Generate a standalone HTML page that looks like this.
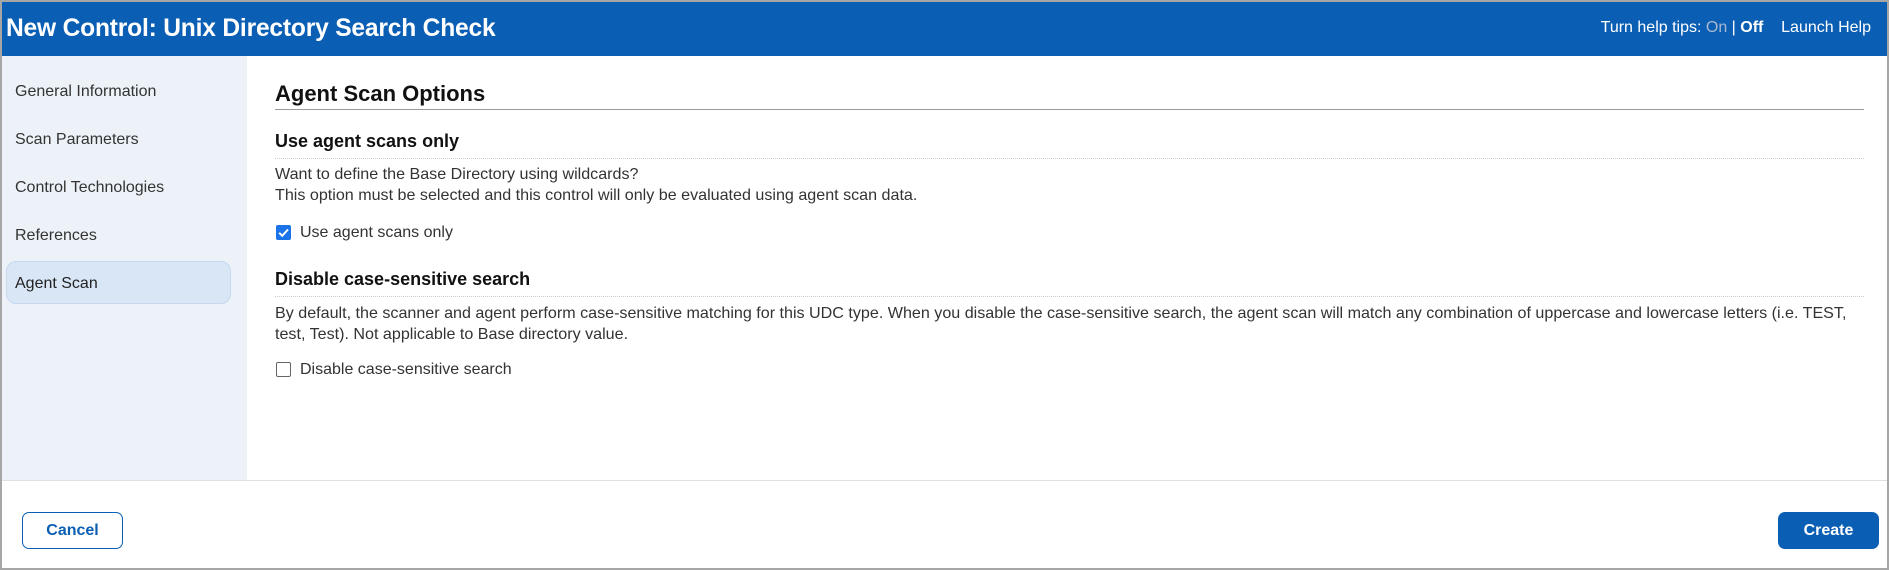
<!DOCTYPE html>
<html><head><style>
*{margin:0;padding:0;box-sizing:border-box}
body{width:1889px;height:570px;font-family:"Liberation Sans",Arial,sans-serif;background:#fff;position:relative;overflow:hidden;color:#222}
.frame{position:absolute;left:0;top:0;width:1889px;height:570px;border:2px solid #a6a6a6}
.hdr{position:absolute;left:2px;top:2px;width:1885px;height:54px;background:#0a5eb3;color:#fff}
.hdr h1{position:absolute;left:4px;top:13px;font-size:24.6px;font-weight:bold;letter-spacing:-0.2px}
.hdr .r{position:absolute;right:16px;top:17px;font-size:16px}
.side{position:absolute;left:2px;top:56px;width:245px;height:424px;background:#edf2f9}
.side div.t{position:absolute;left:13px;font-size:16px;color:#333}
.pill{position:absolute;left:4px;top:205px;width:225px;height:43px;background:#d9e6f5;border:1px solid #c5d8ee;border-radius:10px}
.c{position:absolute;left:275px;right:25px}
h2{font-size:22px;font-weight:bold;color:#111}
h3{font-size:18px;font-weight:bold;color:#111}
p{font-size:16.1px;color:#333;line-height:20.5px}
.cb{position:absolute;left:276px;width:15px;height:15px;border-radius:2px}
.lab{position:absolute;left:300px;font-size:16px;color:#333}
.btn{position:absolute;top:512px;height:37px;border-radius:7px;font-size:16px;font-weight:bold;text-align:center;line-height:37px}
</style></head><body>
<div class="hdr"><h1>New Control: Unix Directory Search Check</h1>
<div class="r">Turn help tips: <span style="color:#a9b9cf">On</span> | <b>Off</b>&nbsp;&nbsp;&nbsp; Launch Help</div></div>
<div class="side">
<div class="pill"></div>
<div class="t" style="top:27px">General Information</div>
<div class="t" style="top:75px">Scan Parameters</div>
<div class="t" style="top:123px">Control Technologies</div>
<div class="t" style="top:171px">References</div>
<div class="t" style="top:219px;color:#222">Agent Scan</div>
</div>
<div class="c" style="top:81px"><h2>Agent Scan Options</h2></div>
<div class="c" style="top:109px;border-top:1px solid #999"></div>
<div class="c" style="top:131px"><h3>Use agent scans only</h3></div>
<div class="c" style="top:158px;border-top:1px dotted #ccc"></div>
<div class="c" style="top:164px"><p>Want to define the Base Directory using wildcards?<br>This option must be selected and this control will only be evaluated using agent scan data.</p></div>
<div class="cb" style="top:225px;background:#1a73e8"><svg width="15" height="15" viewBox="0 0 15 15"><path d="M3.2 7.8l3 3L12 4.5" stroke="#fff" stroke-width="2" fill="none"/></svg></div>
<div class="lab" style="top:224px">Use agent scans only</div>
<div class="c" style="top:269px"><h3>Disable case-sensitive search</h3></div>
<div class="c" style="top:296px;border-top:1px dotted #ccc"></div>
<div class="c" style="top:303px"><p>By default, the scanner and agent perform case-sensitive matching for this UDC type. When you disable the case-sensitive search, the agent scan will match any combination of uppercase and lowercase letters (i.e. TEST, test, Test). Not applicable to Base directory value.</p></div>
<div class="cb" style="top:362px;border:1px solid #666;background:#fff"></div>
<div class="lab" style="top:361px">Disable case-sensitive search</div>
<div style="position:absolute;left:2px;right:2px;top:480px;border-top:1px solid #e0e0e0"></div>
<div class="btn" style="left:22px;width:101px;border:1px solid #0a5eb3;color:#0a5eb3;line-height:35px">Cancel</div>
<div class="btn" style="left:1778px;width:101px;background:#0a5eb3;color:#fff">Create</div>
<div class="frame"></div>
</body></html>
